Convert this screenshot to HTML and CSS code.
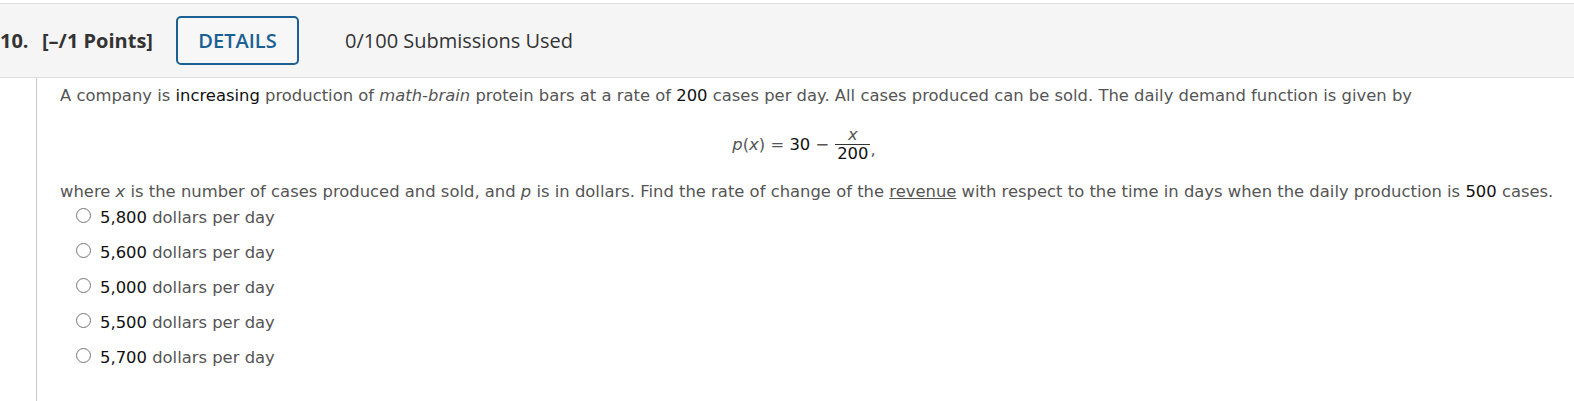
FILE: index.html
```html
<!DOCTYPE html>
<html>
<head>
<meta charset="utf-8">
<link rel="stylesheet" href="styles.css">
</head>
<body>
<div class="q-header">
  <span class="q-num">10.</span>
  <span class="q-points">[–/1 Points]</span>
  <button class="details-btn">DETAILS</button>
  <span class="subs">0/100 Submissions Used</span>
</div>
<div class="q-body">
  <div class="q-content">
    <p class="line">A company is <span class="dk">increasing</span> production of <i>math-brain</i> protein bars at a rate of <span class="dk">200</span> cases per day. All cases produced can be sold. The daily demand function is given by</p>
    <div class="eq">
      <span class="eq-lhs"><i>p</i>(<i>x</i>) = <span class="dk">30</span> − </span>
      <span class="frac"><span class="num"><i>x</i></span><span class="den dk">200</span></span><span class="comma">,</span>
    </div>
    <p class="line">where <i>x</i> is the number of cases produced and sold, and <i>p</i> is in dollars. Find the rate of change of the <u>revenue</u> with respect to the time in days when the daily production is <span class="dk">500</span> cases.</p>
    <ul class="choices">
      <li><span class="radio"></span><span><span class="dk">5,800</span> dollars per day</span></li>
      <li><span class="radio"></span><span><span class="dk">5,600</span> dollars per day</span></li>
      <li><span class="radio"></span><span><span class="dk">5,000</span> dollars per day</span></li>
      <li><span class="radio"></span><span><span class="dk">5,500</span> dollars per day</span></li>
      <li><span class="radio"></span><span><span class="dk">5,700</span> dollars per day</span></li>
    </ul>
  </div>
</div>
</body>
</html>
```
FILE: styles.css
```css
html, body {
  margin: 0;
  padding: 0;
  background: #fff;
}
body {
  padding-top: 3px;
}
.q-header {
  display: flex;
  align-items: center;
  height: 73px;
  background: #f5f5f5;
  border-top: 1px solid #dedede;
  border-bottom: 1px solid #dedede;
  font-family: "Open Sans", sans-serif;
  color: #333;
}
.q-num {
  font-weight: 700;
  font-size: 20px;
  width: 42px;
  flex: none;
}
.q-points {
  font-weight: 700;
  font-size: 20px;
  width: 134px;
  flex: none;
}
.details-btn {
  width: 123px;
  height: 49px;
  border: 2px solid #1a6094;
  border-radius: 5px;
  background: #f7f7f7;
  color: #1a6094;
  font-family: "Open Sans", sans-serif;
  font-weight: 600;
  font-size: 20px;
  padding: 0;
  flex: none;
}
.subs {
  margin-left: 46px;
  font-size: 20px;
  color: #333;
}
.q-body {
  margin-left: 36px;
  border-left: 1px solid #cccccc;
  min-height: 330px;
  font-family: "DejaVu Sans", Verdana, sans-serif;
  font-size: 16.4px;
  color: #555;
}
.q-content {
  padding-left: 23px;
  padding-right: 12px;
  padding-top: 7px;
}
.line {
  margin: 0;
  line-height: 22px;
}
.dk {
  color: #111;
}
.eq {
  display: flex;
  justify-content: center;
  align-items: center;
  height: 74px;
  padding-right: 14px;
}
.frac {
  display: inline-flex;
  flex-direction: column;
  align-items: center;
  margin-left: 6px;
  line-height: 18px;
}
.frac .num {
  padding: 0 4px;
}
.frac .den {
  border-top: 1px solid #333;
  padding: 0 2px;
}
.comma {
  margin-top: 10px;
}
.choices {
  list-style: none;
  margin: -3px 0 0 0;
  padding: 0 0 0 16px;
}
.choices li {
  display: flex;
  align-items: center;
  height: 35px;
}
.radio {
  width: 13px;
  height: 13px;
  border: 1px solid #767676;
  border-radius: 50%;
  background: #fff;
  margin-right: 9px;
  margin-top: -5px;
  flex: none;
}
```
